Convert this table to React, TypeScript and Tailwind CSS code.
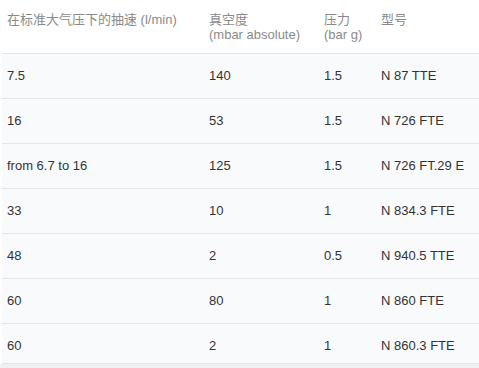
const rows = [
  ["7.5", "140", "1.5", "N 87 TTE"],
  ["16", "53", "1.5", "N 726 FTE"],
  ["from 6.7 to 16", "125", "1.5", "N 726 FT.29 E"],
  ["33", "10", "1", "N 834.3 FTE"],
  ["48", "2", "0.5", "N 940.5 TTE"],
  ["60", "80", "1", "N 860 FTE"],
  ["60", "2", "1", "N 860.3 FTE"],
]

export default function App() {
  return (
    <div
      className="w-[479px] h-[368px] bg-white overflow-hidden text-[13px] leading-[15px]"
      style={{ fontFamily: '"Liberation Sans", Arial, "Noto Sans CJK SC", sans-serif' }}
    >
      <div className="h-[364px] overflow-hidden border-b border-[#e4e6ea] ml-[2px]">
        <table className="w-[477px] table-fixed border-collapse">
          <thead>
            <tr className="h-[53px] border-b border-[#e4e6ea] text-[#8a8a8a] align-top">
              <th className="w-[207px] pl-[5px] pt-[12px] text-left font-normal">在标准大气压下的抽速 (l/min)</th>
              <th className="w-[115px] pt-[12px] text-left font-normal">
                真空度
                <br />
                (mbar absolute)
              </th>
              <th className="w-[57px] pt-[12px] text-left font-normal">
                压力
                <br />
                (bar g)
              </th>
              <th className="pt-[12px] text-left font-normal">型号</th>
            </tr>
          </thead>
          <tbody className="text-[#333]">
            {rows.map((r, i) => (
              <tr key={i} className="h-[45px] bg-[#f9fafc] border-b border-[#e4e6ea]">
                <td className="pl-[5px]">{r[0]}</td>
                <td>{r[1]}</td>
                <td>{r[2]}</td>
                <td>{r[3]}</td>
              </tr>
            ))}
          </tbody>
        </table>
      </div>
      <div className="h-[4px] bg-[#eff0f2]" />
    </div>
  )
}
